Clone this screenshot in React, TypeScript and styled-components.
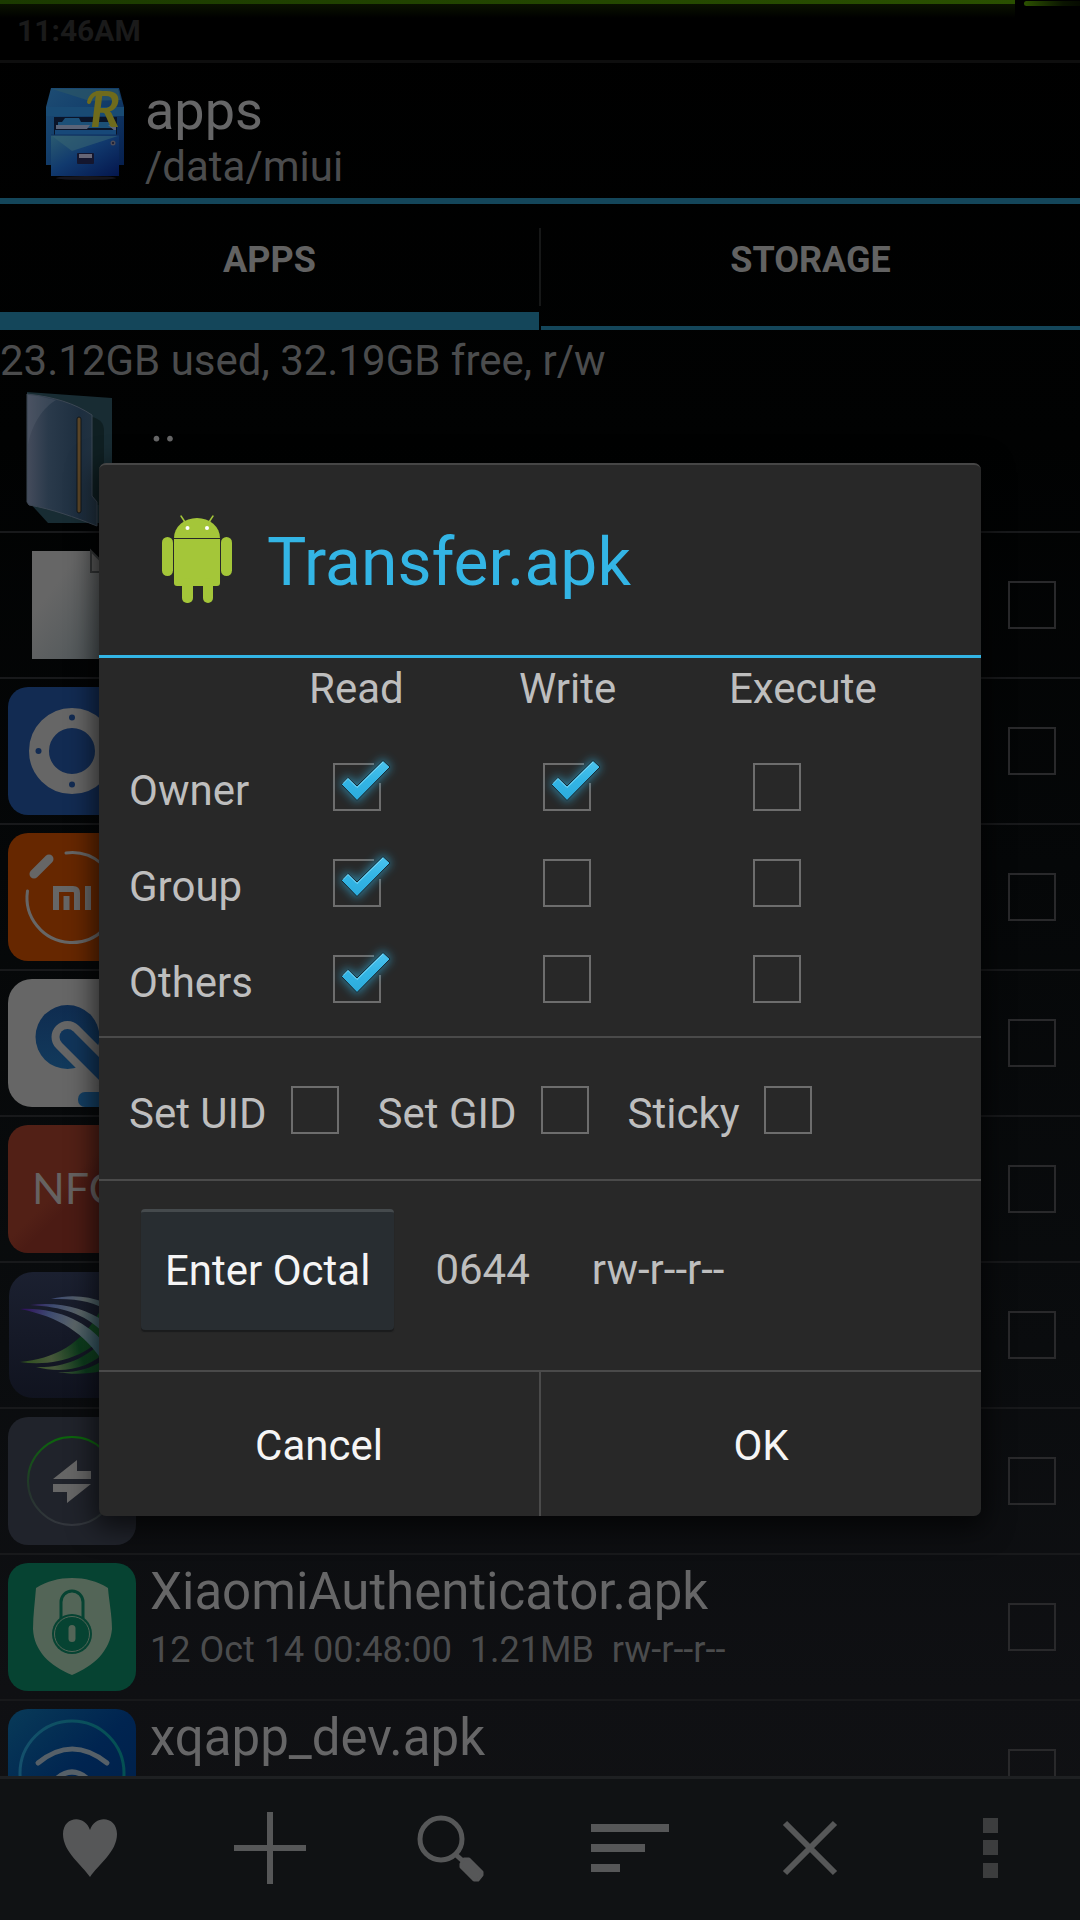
import React, { useState } from "react";
import styled, { createGlobalStyle } from "styled-components";

const GlobalStyle = createGlobalStyle`
  * { box-sizing: border-box; }
  body {
    margin: 0;
    background: #000;
    font-family: Roboto, "Noto Sans", sans-serif;
  }
  button { font-family: inherit; border: 0; background: none; padding: 0; margin: 0; cursor: pointer; }
  svg { display: block; overflow: visible; }
`;

const DIM_BLUE = "#14465a";
const HOLO_BLUE = "#33b5e5";
const TEXT_SOFT = "#4b4c4d";
const TEXT_MAIN = "#666667";

const Screen = styled.div`
  position: relative;
  display: flex;
  flex-direction: column;
  height: 100vh;
  overflow: hidden;
  background: linear-gradient(#000000 0%, #010202 23%, #050708 45%, #0a0c0e 70%, #0f1013 88%, #111214 100%);
`;

const StatusBar = styled.div`
  flex: none;
  position: relative;
  padding: 2px 0 0 17px;
  border-bottom: 3px solid #0e0e0e;
  background: #000;
  color: #1a1a1a;
  font-size: 30px;
  font-weight: 700;
  line-height: 58px;
`;

const BatteryLine = styled.div`
  position: absolute;
  top: 0;
  left: 0;
  width: 94%;
  height: 20px;
  background: linear-gradient(#0a1200, rgba(5, 10, 0, 0)) 0 4px / 100% 14px no-repeat,
    linear-gradient(90deg, #1b3a00, #2a5000) 0 0 / 100% 4px no-repeat;
`;

const BatterySpark = styled.div`
  position: absolute;
  top: 1px;
  right: 0;
  width: 56px;
  height: 5px;
  border-radius: 3px 0 0 3px;
  background: linear-gradient(90deg, #2c5200, #0a1400 70%, #050a00);
`;

const Header = styled.header`
  flex: none;
  display: flex;
  align-items: flex-start;
  gap: 11px;
  padding: 17px 38px 6px;
  border-bottom: 6px solid ${DIM_BLUE};
`;

const AppIcon = styled.svg`
  flex: none;
  width: 96px;
  height: 96px;
  margin-top: 6px;
`;

const HeaderTitle = styled.h1`
  margin: 0;
  color: ${TEXT_MAIN};
  font-size: 54px;
  font-weight: 400;
  line-height: 62px;
`;

const HeaderPath = styled.div`
  color: ${TEXT_SOFT};
  font-size: 42px;
  line-height: 50px;
`;

const Tabs = styled.nav`
  flex: none;
  display: flex;
`;

const Tab = styled.button<{ $active?: boolean }>`
  && {
    flex: 1;
    padding: 35px 0 49px;
    color: #626262;
    font-size: 36px;
    font-weight: 700;
    line-height: 42px;
    box-shadow: inset 0 ${(p) => (p.$active ? "-18px" : "-4px")} 0 ${DIM_BLUE};
  }
`;

const TabDivider = styled.span`
  width: 2px;
  height: 78px;
  margin-top: 24px;
  background: #161717;
`;

const Usage = styled.div`
  flex: none;
  padding-top: 4px;
  color: ${TEXT_SOFT};
  font-size: 42px;
  line-height: 53px;
  white-space: nowrap;
`;

const FileList = styled.ul`
  flex: 1;
  min-height: 0;
  margin: 0;
  padding: 0;
  overflow: hidden;
  list-style: none;
`;

const FileRow = styled.li`
  display: flex;
  gap: 14px;
  padding: 0 24px 0 8px;
  border-bottom: 2px solid #18191b;
`;

const FileIcon = styled.svg`
  flex: none;
  width: 128px;
  height: 128px;
  margin: 8px 0;
`;

const FileText = styled.div`
  flex: 1;
  display: flex;
  flex-direction: column;
  gap: 5px;
  padding-top: 6px;
`;

const FileName = styled.div`
  color: ${TEXT_MAIN};
  font-size: 51px;
  line-height: 62px;
`;

const FileMeta = styled.div`
  color: ${TEXT_SOFT};
  font-size: 36px;
  line-height: 44px;
  white-space: pre;
`;

const BoxInput = styled.input<{ $dim?: boolean }>`
  appearance: none;
  flex: none;
  align-self: center;
  display: block;
  width: 48px;
  height: 48px;
  margin: 0;
  border: 2px solid ${(p) => (p.$dim ? "#29292b" : "#6d6d6d")};
  &:checked { border-color: transparent; }
`;

const Toolbar = styled.footer`
  flex: none;
  display: flex;
  padding: 21px 0 24px;
  border-top: 3px solid #1e2022;
  background: #101214;
`;

const ToolButton = styled.button`
  flex: 1;
  display: flex;
  justify-content: center;
  color: #565758;
  svg { width: 96px; height: 96px; }
`;

const Overlay = styled.div`
  position: absolute;
  inset: 0;
  display: grid;
  align-items: center;
  padding: 58px 99px 0;
`;

const Dialog = styled.section`
  border-top: 2px solid #464646;
  border-radius: 7px;
  background: #282828;
  box-shadow: 0 8px 28px 4px rgba(0, 0, 0, 0.65);
  color: #bebebe;
  font-size: 42px;
  line-height: 50px;
`;

const DialogHeader = styled.header`
  display: flex;
  align-items: center;
  gap: 22px;
  padding: 47px 50px;
  border-bottom: 3px solid ${HOLO_BLUE};
  svg { flex: none; width: 96px; height: 96px; }
`;

const DialogTitle = styled.h2`
  margin: 0;
  padding-top: 6px;
  color: ${HOLO_BLUE};
  font-size: 66px;
  font-weight: 400;
  line-height: 78px;
`;

const PermTable = styled.table`
  width: 100%;
  table-layout: fixed;
  border-collapse: collapse;
  th, td { padding: 0; text-align: left; font-weight: 400; }
  thead th { height: 81px; padding-top: 6px; vertical-align: top; }
  tbody tr { height: 96px; }
  tbody th { padding-top: 8px; }
`;

const PermSection = styled.div`
  padding: 0 0 9px 30px;
  border-bottom: 2px solid #4a4a4a;
`;

const Column = styled.col<{ $width?: number }>`
  width: ${(p) => (p.$width ? `${p.$width}px` : "auto")};
`;

const CheckSlot = styled.span`
  position: relative;
  display: block;
  width: 48px;
  height: 48px;
  margin: 0 24px;
  svg { position: absolute; inset: 0; width: 48px; height: 48px; pointer-events: none; }
`;

const FlagSection = styled.div`
  display: flex;
  gap: 15px;
  padding: 24px 30px 21px;
  border-bottom: 2px solid #4a4a4a;
`;

const FlagLabel = styled.label`
  display: flex;
  align-items: center;
  height: 96px;
`;

const FlagName = styled.span`
  padding-top: 8px;
  white-space: nowrap;
`;

const OctalSection = styled.div`
  display: flex;
  align-items: center;
  padding: 28px 42px 40px;
  border-bottom: 2px solid #4a4a4a;
`;

const OctalButton = styled.button`
  && {
    padding: 34px 24px 34px;
    border-top: 3px solid #454a4d;
    border-radius: 4px;
    background: #282d31;
    box-shadow: 0 2px 1px #1a1b1c;
    color: #f5f5f5;
    font-size: 42px;
    line-height: 50px;
  }
`;

const OctalValue = styled.output`
  margin-left: 41px;
  padding-top: 2px;
`;

const SymbolicValue = styled.output`
  margin-left: 62px;
  padding-top: 2px;
`;

const DialogActions = styled.footer`
  display: flex;
`;

const ActionButton = styled.button`
  && {
    flex: 1;
    height: 144px;
    padding-top: 4px;
    color: #f5f5f5;
    font-size: 42px;
    line-height: 50px;
  }
`;

const ActionDivider = styled.span`
  width: 2px;
  background: #4a4a4a;
`;

function PermCheck({ label, initial = false, id }: { label?: string; initial?: boolean; id?: string }) {
  const [checked, setChecked] = useState(initial);
  return (
    <CheckSlot>
      <BoxInput
        id={id}
        type="checkbox"
        aria-label={label}
        checked={checked}
        onChange={(e) => setChecked(e.target.checked)}
      />
      {checked && (
        <svg viewBox="0 0 48 48" aria-hidden="true">
          <defs>
            <linearGradient id="tick" x1="0" y1="0" x2="0" y2="1">
              <stop offset="0" stopColor="#4cc3ee" />
              <stop offset="0.5" stopColor="#33b5e5" />
              <stop offset="1" stopColor="#2cabdc" />
            </linearGradient>
            <filter id="glow" x="-60%" y="-60%" width="220%" height="220%">
              <feGaussianBlur stdDeviation="5" />
            </filter>
          </defs>
          <path d="M41 1H1V47H47V20" fill="none" stroke="#6d6d6d" strokeWidth="2" />
          <path d="M9 21L15 15L24 23.500L50 -2L56 4L24 37Z" fill="#33b5e5" stroke="#33b5e5" strokeWidth="4" opacity="0.6" filter="url(#glow)" />
          <path d="M8.500 21.500L15 14.500L24 23L50 -2.500L57 4L24 37.500Z" fill="url(#tick)" stroke="#16262d" strokeWidth="1" />
          <path d="M10 20.500L15 15.500L24 24.500L50 -1" fill="none" stroke="#7fd8f6" strokeWidth="1" />
        </svg>
      )}
    </CheckSlot>
  );
}

function CabinetIcon() {
  return (
    <AppIcon viewBox="0 0 96 96" aria-hidden="true">
      <defs>
        <linearGradient id="cabTop" x1="0" y1="0" x2="1" y2="1">
          <stop offset="0" stopColor="#1d4c73" />
          <stop offset="0.4" stopColor="#14406c" />
          <stop offset="1" stopColor="#061f4e" />
        </linearGradient>
        <linearGradient id="cabFront" x1="0" y1="0" x2="1" y2="1">
          <stop offset="0" stopColor="#2b5b70" />
          <stop offset="0.45" stopColor="#113a6e" />
          <stop offset="1" stopColor="#04164d" />
        </linearGradient>
      </defs>
      <ellipse cx="48" cy="92" rx="30" ry="2" fill="#15151d" />
      <path d="M13 2H81L86 21V79H8V21Z" fill="url(#cabTop)" />
      <path d="M14 3H80L83 14L52 15Z" fill="#2b5566" opacity="0.7" />
      <path d="M8 21H86V30H8Z" fill="#194b74" />
      <path d="M16 31H79V49H16Z" fill="#0a1428" />
      <path d="M24 36L27 32H41L43 36H76V42H20V36Z" fill="#1c5078" />
      <path d="M18 39H52L49 43H18ZM70 39H78V46Z" fill="#5b6478" />
      <path d="M17 44H78V49H17Z" fill="#174878" />
      <path d="M13 49H81V90H13Z" fill="url(#cabFront)" />
      <path d="M14 50H80L34 65Z" fill="#366272" opacity="0.6" />
      <path d="M13 49H81" stroke="#102e5c" strokeWidth="1" />
      <rect x="39" y="67" width="17" height="11" rx="1" fill="#14162e" />
      <rect x="41" y="68" width="13" height="4" fill="#666676" />
      <circle cx="75" cy="57" r="2.500" fill="#4c4c58" />
      <circle cx="75" cy="57" r="1" fill="#14162e" />
      <text x="52" y="41" fill="#6f6b1c" fontFamily="Lato, sans-serif" fontStyle="italic" fontWeight="700" fontSize="50">R</text>
      <path d="M51 16C53 9 58 6 64 7" fill="none" stroke="#6f6b1c" strokeWidth="4" strokeLinecap="round" />
    </AppIcon>
  );
}

function AndroidIcon() {
  return (
    <svg viewBox="0 0 96 96" aria-hidden="true" fill="#a4c639">
      <path d="M25 26A23 20 0 0 1 71 26Z" />
      <path d="M32 4L36 10M64 4L60 10" stroke="#a4c639" strokeWidth="1.500" strokeLinecap="round" />
      <circle cx="38.500" cy="16" r="2" fill="#fff" />
      <circle cx="58" cy="16" r="2" fill="#fff" />
      <path d="M25 27H71V71A3 3 0 0 1 68 74H28A3 3 0 0 1 25 71Z" />
      <rect x="13" y="25" width="11" height="39" rx="5.500" />
      <rect x="72" y="25" width="11" height="39" rx="5.500" />
      <rect x="33" y="66" width="11" height="25" rx="5" />
      <rect x="54" y="66" width="10" height="25" rx="5" />
    </svg>
  );
}

const fileArt: Record<string, React.ReactNode> = {
  folder: (
    <>
      <defs>
        <linearGradient id="fold" x1="0" y1="0" x2="1" y2="0">
          <stop offset="0" stopColor="#454c5c" />
          <stop offset="0.3" stopColor="#2a3a4b" />
          <stop offset="0.75" stopColor="#1d2e3f" />
          <stop offset="1" stopColor="#223240" />
        </linearGradient>
      </defs>
      <path d="M19 -3L104 3V128H40L19 105Z" fill="#182c33" />
      <path d="M84 22C92 24 96 28 96 36V110H84Z" fill="#0f1f22" />
      <path d="M19 -1C46 2 66 8 84 20V101L89 107V131C66 122 44 114 21 110L19 107Z" fill="url(#fold)" stroke="#3b4653" strokeWidth="1" />
      <path d="M20 50C24 28 36 12 48 5L30 1L20 0Z" fill="#59606f" opacity="0.35" />
      <rect x="69" y="22" width="4" height="96" rx="2" fill="#5a4527" stroke="#10161b" strokeWidth="1" />
    </>
  ),
  file: (
    <>
      <defs>
        <linearGradient id="page" x1="0" y1="0" x2="1" y2="1">
          <stop offset="0.3" stopColor="#666666" />
          <stop offset="1" stopColor="#4c5457" />
        </linearGradient>
      </defs>
      <path d="M24 10H83L104 30V118H24Z" fill="url(#page)" />
      <path d="M83 10V31H104Z" fill="#5a5a5a" stroke="#343637" strokeWidth="2" />
    </>
  ),
  ring: (
    <>
      <rect width="128" height="128" rx="20" fill="#122b52" />
      <circle cx="64" cy="64" r="33" fill="none" stroke="#666666" strokeWidth="20" />
      <g fill="#122b52">
        <circle cx="64" cy="30.500" r="3" />
        <circle cx="30.500" cy="64" r="3" />
        <circle cx="64" cy="97.500" r="3" />
        <circle cx="97.500" cy="64" r="3" />
      </g>
    </>
  ),
  band: (
    <>
      <rect width="128" height="128" rx="20" fill="#662700" />
      <path d="M58 20A45 45 0 1 1 19.500 58" fill="none" stroke="#666666" strokeWidth="3" strokeLinecap="round" />
      <path d="M26 41L41 26" stroke="#666666" strokeWidth="9" strokeLinecap="round" />
      <g fill="none" stroke="#666666" strokeWidth="6">
        <path d="M48 77V56H65Q69 56 69 60V77" />
        <path d="M58.500 63V77" />
        <path d="M80 53V77" />
      </g>
    </>
  ),
  clip: (
    <>
      <defs>
        <clipPath id="clipCard"><rect width="128" height="128" rx="24" /></clipPath>
        <linearGradient id="clipBlue" x1="0" y1="0" x2="0" y2="1">
          <stop offset="0" stopColor="#0f2c50" />
          <stop offset="1" stopColor="#123a5c" />
        </linearGradient>
      </defs>
      <g clipPath="url(#clipCard)">
        <rect width="128" height="128" fill="#666666" />
        <circle cx="59.500" cy="58" r="32" fill="url(#clipBlue)" />
        <path d="M59.500 58L92 90.500" stroke="#666666" strokeWidth="32" strokeLinecap="round" />
        <path d="M59.500 58L102 100.500" stroke="#11355a" strokeWidth="16" strokeLinecap="round" />
        <rect x="70" y="113" width="80" height="15" rx="7" fill="#143f63" />
      </g>
    </>
  ),
  nfc: (
    <>
      <defs>
        <linearGradient id="nfcBg" x1="0" y1="0" x2="1" y2="1">
          <stop offset="0.45" stopColor="#522016" />
          <stop offset="0.55" stopColor="#4b1b14" />
        </linearGradient>
      </defs>
      <rect width="128" height="128" rx="20" fill="url(#nfcBg)" />
      <text x="24" y="79" fill="#666261" fontFamily="Lato, sans-serif" fontSize="43">NFC</text>
    </>
  ),
  wings: (
    <>
      <defs>
        <linearGradient id="wingBg" x1="0" y1="0" x2="0" y2="1">
          <stop offset="0" stopColor="#1b2030" />
          <stop offset="1" stopColor="#10131f" />
        </linearGradient>
        <linearGradient id="wingTop" gradientUnits="userSpaceOnUse" x1="14" y1="36" x2="100" y2="70">
          <stop offset="0" stopColor="#2f0c5c" />
          <stop offset="0.3" stopColor="#3d4a70" />
          <stop offset="0.6" stopColor="#5c6668" />
          <stop offset="1" stopColor="#2c5563" />
        </linearGradient>
        <linearGradient id="wingLow" gradientUnits="userSpaceOnUse" x1="14" y1="94" x2="96" y2="70">
          <stop offset="0" stopColor="#2d4f1c" />
          <stop offset="0.35" stopColor="#47583a" />
          <stop offset="0.7" stopColor="#0c3a1c" />
          <stop offset="1" stopColor="#144823" />
        </linearGradient>
      </defs>
      <rect x="1" y="1" width="126" height="126" rx="24" fill="url(#wingBg)" />
      <g fill="url(#wingLow)">
        <path d="M12 91C45 88 75 74 94 36L104 54C84 86 46 96 12 91Z" />
        <path d="M28 96C54 97 78 88 94 70L100 78C80 100 52 102 28 96Z" />
        <path d="M50 101C66 102 82 98 94 90V100C80 103 64 104 50 101Z" />
      </g>
      <g fill="url(#wingTop)">
        <path d="M43 28C62 23 80 25 96 31V38C82 29 66 28 43 28Z" />
        <path d="M22 34C52 30 78 38 96 50V62C76 42 54 36 22 34Z" />
        <path d="M12 38C50 36 80 52 96 72V92C76 62 52 46 12 38Z" />
      </g>
    </>
  ),
  transfer: (
    <>
      <defs>
        <linearGradient id="halo" x1="0" y1="0" x2="0" y2="1">
          <stop offset="0" stopColor="#0c660c" />
          <stop offset="0.6" stopColor="#24352c" />
          <stop offset="1" stopColor="#33363d" />
        </linearGradient>
      </defs>
      <rect width="128" height="128" rx="20" fill="#20232b" />
      <circle cx="64" cy="64" r="44" fill="none" stroke="url(#halo)" strokeWidth="2" />
      <path d="M69 43V54H83V62H45ZM45 67H83L59 86V75H45Z" fill="#666666" />
    </>
  ),
  shield: (
    <>
      <rect width="128" height="128" rx="20" fill="#064332" />
      <path d="M64 15C77 15 89 18 100 25C101 38 104 52 104 66C102 88 86 103 64 112C42 103 26 88 25 66C25 52 27 38 28 25C39 18 51 15 64 15Z" fill="#536557" />
      <path d="M53 56V39A11 11 0 0 1 75 39V56" fill="none" stroke="#064332" strokeWidth="3" />
      <circle cx="64" cy="71" r="20" fill="#064332" />
      <circle cx="64" cy="71" r="17.500" fill="none" stroke="#536557" strokeWidth="1" />
      <rect x="60.500" y="62" width="7" height="17" rx="3.500" fill="#536557" />
    </>
  ),
  wifi: (
    <>
      <defs>
        <linearGradient id="wifiBg" x1="0" y1="0" x2="1" y2="1">
          <stop offset="0" stopColor="#083a58" />
          <stop offset="0.5" stopColor="#002450" />
          <stop offset="1" stopColor="#001f48" />
        </linearGradient>
        <linearGradient id="wifiRing" x1="0" y1="0" x2="1" y2="0">
          <stop offset="0" stopColor="#14506c" />
          <stop offset="1" stopColor="#045052" />
        </linearGradient>
      </defs>
      <rect width="128" height="128" rx="20" fill="url(#wifiBg)" />
      <circle cx="64" cy="64" r="52" fill="none" stroke="url(#wifiRing)" strokeWidth="3" />
      <g fill="none" stroke="#566068" strokeWidth="5" strokeLinecap="round">
        <path d="M30 54Q64 26 99 54" />
        <path d="M46 72Q64 54 82 72" />
      </g>
    </>
  ),
};

type FileEntry = { art: string; name?: string; meta?: string; selectable: boolean };

const files: FileEntry[] = [
  { art: "folder", name: "..", selectable: false },
  { art: "file", selectable: true },
  { art: "ring", selectable: true },
  { art: "band", selectable: true },
  { art: "clip", selectable: true },
  { art: "nfc", selectable: true },
  { art: "wings", selectable: true },
  { art: "transfer", selectable: true },
  { art: "shield", name: "XiaomiAuthenticator.apk", meta: "12 Oct 14 00:48:00  1.21MB  rw-r--r--", selectable: true },
  { art: "wifi", name: "xqapp_dev.apk", selectable: true },
];

const tools: { label: string; art: React.ReactNode }[] = [
  {
    label: "Favorites",
    art: <path d="M48 77C40 65 21 52 21 34C21 16 43 14 48 30C53 14 75 16 75 34C75 52 56 65 48 77Z" fill="currentColor" />,
  },
  { label: "Add", art: <path d="M48 12V84M12 48H84" stroke="currentColor" strokeWidth="6" /> },
  {
    label: "Search",
    art: (
      <g fill="none" stroke="currentColor">
        <circle cx="39" cy="39" r="21" strokeWidth="5" />
        <path d="M53 54L62 62" strokeWidth="5" />
        <path d="M62 59L67 59L80 72L80 75L76 80L72 80L59 67L59 64Z" fill="currentColor" strokeWidth="3" strokeLinejoin="round" />
      </g>
    ),
  },
  { label: "Sort", art: <path d="M9 24H87V32H9ZM9 44H63V52H9ZM9 64H38V72H9Z" fill="currentColor" /> },
  { label: "Close", art: <path d="M23 23L73 73M73 23L23 73" stroke="currentColor" strokeWidth="6" /> },
  { label: "More options", art: <path d="M41 18H56V33H41ZM41 40H56V55H41ZM41 63H56V78H41Z" fill="#3c3d3e" /> },
];

const permissions = [
  { who: "Owner", flags: [true, true, false] },
  { who: "Group", flags: [true, false, false] },
  { who: "Others", flags: [true, false, false] },
];
const modes = ["Read", "Write", "Execute"];

export default function App() {
  return (
    <>
      <GlobalStyle />
      <Screen>
        <StatusBar>
          11:46AM
          <BatteryLine />
          <BatterySpark />
        </StatusBar>
        <Header>
          <CabinetIcon />
          <div>
            <HeaderTitle>apps</HeaderTitle>
            <HeaderPath>/data/miui</HeaderPath>
          </div>
        </Header>
        <Tabs>
          <Tab type="button" $active>APPS</Tab>
          <TabDivider />
          <Tab type="button">STORAGE</Tab>
        </Tabs>
        <Usage>23.12GB used, 32.19GB free, r/w</Usage>
        <FileList>
          {files.map((file) => (
            <FileRow key={file.art}>
              <FileIcon viewBox="0 0 128 128" aria-hidden="true">{fileArt[file.art]}</FileIcon>
              <FileText>
                {file.name && <FileName>{file.name}</FileName>}
                {file.meta && <FileMeta>{file.meta}</FileMeta>}
              </FileText>
              {file.selectable && <BoxInput $dim type="checkbox" aria-label={`Select ${file.name ?? "file"}`} />}
            </FileRow>
          ))}
        </FileList>
        <Toolbar>
          {tools.map((tool) => (
            <ToolButton key={tool.label} type="button" aria-label={tool.label}>
              <svg viewBox="0 0 96 96" aria-hidden="true">{tool.art}</svg>
            </ToolButton>
          ))}
        </Toolbar>
        <Overlay>
          <Dialog role="dialog" aria-labelledby="dialog-title">
            <DialogHeader>
              <AndroidIcon />
              <DialogTitle id="dialog-title">Transfer.apk</DialogTitle>
            </DialogHeader>
            <PermSection>
              <PermTable>
                <colgroup>
                  <Column $width={180} />
                  <Column $width={210} />
                  <Column $width={210} />
                  <Column />
                </colgroup>
                <thead>
                  <tr>
                    <td />
                    {modes.map((mode) => <th key={mode} scope="col">{mode}</th>)}
                  </tr>
                </thead>
                <tbody>
                  {permissions.map((row) => (
                    <tr key={row.who}>
                      <th scope="row">{row.who}</th>
                      {row.flags.map((on, i) => (
                        <td key={modes[i]}><PermCheck label={`${row.who} ${modes[i]}`} initial={on} /></td>
                      ))}
                    </tr>
                  ))}
                </tbody>
              </PermTable>
            </PermSection>
            <FlagSection>
              {["Set UID", "Set GID", "Sticky"].map((flag) => (
                <FlagLabel key={flag}>
                  <FlagName>{flag}</FlagName>
                  <PermCheck />
                </FlagLabel>
              ))}
            </FlagSection>
            <OctalSection>
              <OctalButton type="button">Enter Octal</OctalButton>
              <OctalValue>0644</OctalValue>
              <SymbolicValue>rw-r--r--</SymbolicValue>
            </OctalSection>
            <DialogActions>
              <ActionButton type="button">Cancel</ActionButton>
              <ActionDivider />
              <ActionButton type="button">OK</ActionButton>
            </DialogActions>
          </Dialog>
        </Overlay>
      </Screen>
    </>
  );
}
